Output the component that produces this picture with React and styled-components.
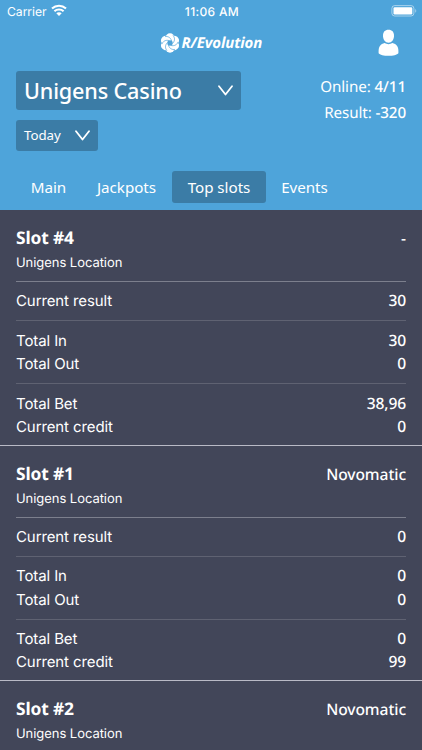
import React from "react";
import styled, { createGlobalStyle, css } from "styled-components";

const Global = createGlobalStyle`
  * { box-sizing: border-box; }
  html, body { margin: 0; padding: 0; overflow: hidden; background: #424659; }
  button { border: 0; padding: 0; margin: 0; color: inherit; font: inherit; letter-spacing: inherit; background: none; }
`;

const sans = `"Noto Sans", "Open Sans", sans-serif`;
const system = `Inter, "Liberation Sans", sans-serif`;

const Screen = styled.div`
  width: 422px;
  height: 750px;
  overflow: hidden;
  background: #424659;
  color: #fff;
  font-family: ${sans};
  white-space: nowrap;
  text-rendering: geometricPrecision;
`;

const Header = styled.header`
  height: 210px;
  background: #4ea4da;
`;

const StatusBar = styled.div`
  display: grid;
  grid-template-columns: 1fr auto 1fr;
  align-items: center;
  height: 22px;
  padding: 0 5px 0 7px;
  font-family: ${system};
  font-size: 12.2px;
`;

const Carrier = styled.div`
  display: flex;
  align-items: center;
  gap: 4px;
  letter-spacing: -0.05px;
  svg { display: block; margin-top: -2px; }
`;

const Clock = styled.div`
  font-size: 12px;
  font-weight: 500;
  letter-spacing: 0.35px;
`;

const Battery = styled.svg`
  display: block;
  justify-self: end;
  margin-top: -1px;
`;

const BrandBar = styled.div`
  display: grid;
  grid-template-columns: 1fr auto 1fr;
  align-items: center;
  height: 42px;
  padding: 0 22px 0 22px;
`;

const Brand = styled.div`
  grid-column: 2;
  display: flex;
  align-items: center;
  gap: 2px;
  svg { display: block; }
`;

const BrandName = styled.span`
  width: 81px;
  font: italic 700 15px/20px "Open Sans", sans-serif;
  letter-spacing: -0.12px;
`;

const ProfileButton = styled.button`
  justify-self: end;
  svg { display: block; }
`;

const Summary = styled.div`
  display: flex;
  justify-content: space-between;
  height: 87px;
  padding: 6.5px 16px 0;
`;

const Filters = styled.div`
  display: flex;
  flex-direction: column;
  align-items: flex-start;
  gap: 10px;
`;

const Select = styled.button`
  display: flex;
  align-items: center;
  justify-content: space-between;
  background: #3b7ca6;
  border-radius: 3px;
  ${({ $large }) =>
    $large
      ? css`
          width: 225px;
          height: 39.5px;
          padding: 0 8px;
          font-size: 21.6px;
          font-weight: 500;
          letter-spacing: -0.15px;
        `
      : css`
          width: 82px;
          height: 30.5px;
          padding: 0 8px;
          font-size: 13.3px;
          letter-spacing: -0.05px;
        `}
`;

const Totals = styled.div`
  padding-top: 3.5px;
  text-align: right;
  font-size: 15.2px;
  line-height: 26px;
  letter-spacing: -0.1px;
  strong { font-weight: 500; }
`;

const Tabs = styled.nav`
  display: flex;
  padding: 20px 16px 0;
`;

const Tab = styled.button`
  height: 32px;
  width: ${({ $width }) => $width}px;
  border-radius: 3px;
  font-size: 15.2px;
  letter-spacing: -0.04px;
  background: ${({ $active }) => ($active ? "#3b7ca6" : "transparent")};
`;

const Slot = styled.section`
  padding: 16px 16px 0;
  ${({ $open }) =>
    !$open &&
    css`
      height: 235.5px;
      border-bottom: 1px solid #b9bac6;
    `}
`;

const SlotHead = styled.div`
  display: flex;
  justify-content: space-between;
  height: 24px;
  line-height: 24px;
`;

const SlotName = styled.h2`
  margin: 0;
  font-size: 17.4px;
  font-weight: 700;
  letter-spacing: -0.15px;
`;

const Vendor = styled.span`
  font-size: 15.6px;
  font-weight: 500;
  letter-spacing: -0.08px;
`;

const Location = styled.div`
  height: 31px;
  padding-top: 3px;
  font: 400 13px/20px ${system};
  letter-spacing: -0.05px;
`;

const Group = styled.div`
  padding: 7.4px 0 7.6px;
  border-top: 1px solid ${({ $first }) => ($first ? "#7c7f8d" : "#5f6272")};
`;

const Row = styled.div`
  display: flex;
  justify-content: space-between;
  height: 23.4px;
  line-height: 23.4px;
`;

const Label = styled.span`
  font-family: ${system};
  font-size: 15px;
  letter-spacing: -0.1px;
`;

const Value = styled.span`
  font-size: 15.6px;
  font-weight: 500;
  letter-spacing: -0.15px;
`;

const Chevron = () => (
  <svg width="15" height="11" viewBox="0 0 15 11" fill="none">
    <path d="M1 1.3 7.5 9.5 14 1.3" stroke="#fff" strokeWidth="1.8" strokeLinecap="round" strokeLinejoin="round" />
  </svg>
);

const Wifi = () => (
  <svg width="16" height="12" viewBox="0 0 16 12" fill="none" stroke="#fff" strokeWidth="2.1">
    <path d="M1 4.6C5 .8 11 .8 15 4.6M3.4 7.2c2.6-2.3 6.6-2.3 9.2 0" />
    <path d="M5.3 9.2c1.5-1.3 3.9-1.3 5.4 0L8 11.9Z" fill="#fff" stroke="none" />
  </svg>
);

const blades = [0, 60, 120, 180, 240, 300];

const Pinwheel = () => (
  <svg width="20" height="20" viewBox="-10 -10 20 20">
    {blades.map((a) => (
      <circle key={a} transform={`rotate(${a})`} cy="-5.1" r="4.6" fill="#fff" />
    ))}
    <circle r="2.7" fill="#4ea4da" />
    {blades.map((a) => (
      <path
        key={a}
        transform={`rotate(${a})`}
        d="M-4.6-6.5C-2.2-6.9.6-5.7 1.6-2.3"
        stroke="#4ea4da"
        strokeWidth=".65"
        strokeLinecap="round"
        fill="none"
      />
    ))}
  </svg>
);

const Person = () => (
  <svg width="23" height="28" viewBox="0 0 23 28" fill="#fff">
    <path d="M11.5.8c3.6 0 5.5 2.2 5.5 5.9 0 4.1-2.3 7-5.5 7S6 10.8 6 6.7C6 3 7.9.8 11.5.8Z" />
    <path d="M7.6 14c2.3 1.5 5.5 1.5 7.8 0 4 .8 6 3.7 6 8v2.3c-2.2 3.4-17.6 3.4-19.8 0V22c0-4.3 2-7.2 6-8Z" />
  </svg>
);

const slots = [
  {
    name: "Slot #4",
    vendor: "-",
    groups: [
      [["Current result", "30"]],
      [["Total In", "30"], ["Total Out", "0"]],
      [["Total Bet", "38,96"], ["Current credit", "0"]],
    ],
  },
  {
    name: "Slot #1",
    vendor: "Novomatic",
    groups: [
      [["Current result", "0"]],
      [["Total In", "0"], ["Total Out", "0"]],
      [["Total Bet", "0"], ["Current credit", "99"]],
    ],
  },
  { name: "Slot #2", vendor: "Novomatic", groups: [] },
];

const tabs = [
  { label: "Main", width: 65 },
  { label: "Jackpots", width: 91 },
  { label: "Top slots", width: 94, active: true },
  { label: "Events", width: 77 },
];

const Stat = ({ label, value }) => (
  <Row>
    <Label>{label}</Label>
    <Value>{value}</Value>
  </Row>
);

export default function App() {
  return (
    <Screen>
      <Global />
      <Header>
        <StatusBar>
          <Carrier>Carrier <Wifi /></Carrier>
          <Clock>11:06 AM</Clock>
          <Battery width="26" height="12" viewBox="0 0 26 12">
            <rect x=".9" y=".6" width="22" height="10.4" rx="2.8" fill="none" stroke="#fff" strokeOpacity=".5" />
            <rect x="2.5" y="2.2" width="18.8" height="7.2" rx="1.2" fill="#fff" />
            <path d="M24.3 4v3.8c1.3-.6 1.3-3.2 0-3.8Z" fill="#fff" fillOpacity=".55" />
          </Battery>
        </StatusBar>
        <BrandBar>
          <Brand>
            <Pinwheel />
            <BrandName>R/Evolution</BrandName>
          </Brand>
          <ProfileButton aria-label="Profile"><Person /></ProfileButton>
        </BrandBar>
        <Summary>
          <Filters>
            <Select $large>Unigens Casino <Chevron /></Select>
            <Select>Today <Chevron /></Select>
          </Filters>
          <Totals>
            <div>Online: <strong>4/11</strong></div>
            <div>Result: <strong>-320</strong></div>
          </Totals>
        </Summary>
        <Tabs>
          {tabs.map((t) => (
            <Tab key={t.label} $width={t.width} $active={t.active}>{t.label}</Tab>
          ))}
        </Tabs>
      </Header>
      {slots.map((s) => (
        <Slot key={s.name} $open={s.groups.length === 0}>
          <SlotHead>
            <SlotName>{s.name}</SlotName>
            <Vendor>{s.vendor}</Vendor>
          </SlotHead>
          <Location>Unigens Location</Location>
          {s.groups.map((rows, i) => (
            <Group key={i} $first={i === 0}>
              {rows.map(([label, value]) => (
                <Stat key={label} label={label} value={value} />
              ))}
            </Group>
          ))}
        </Slot>
      ))}
    </Screen>
  );
}
